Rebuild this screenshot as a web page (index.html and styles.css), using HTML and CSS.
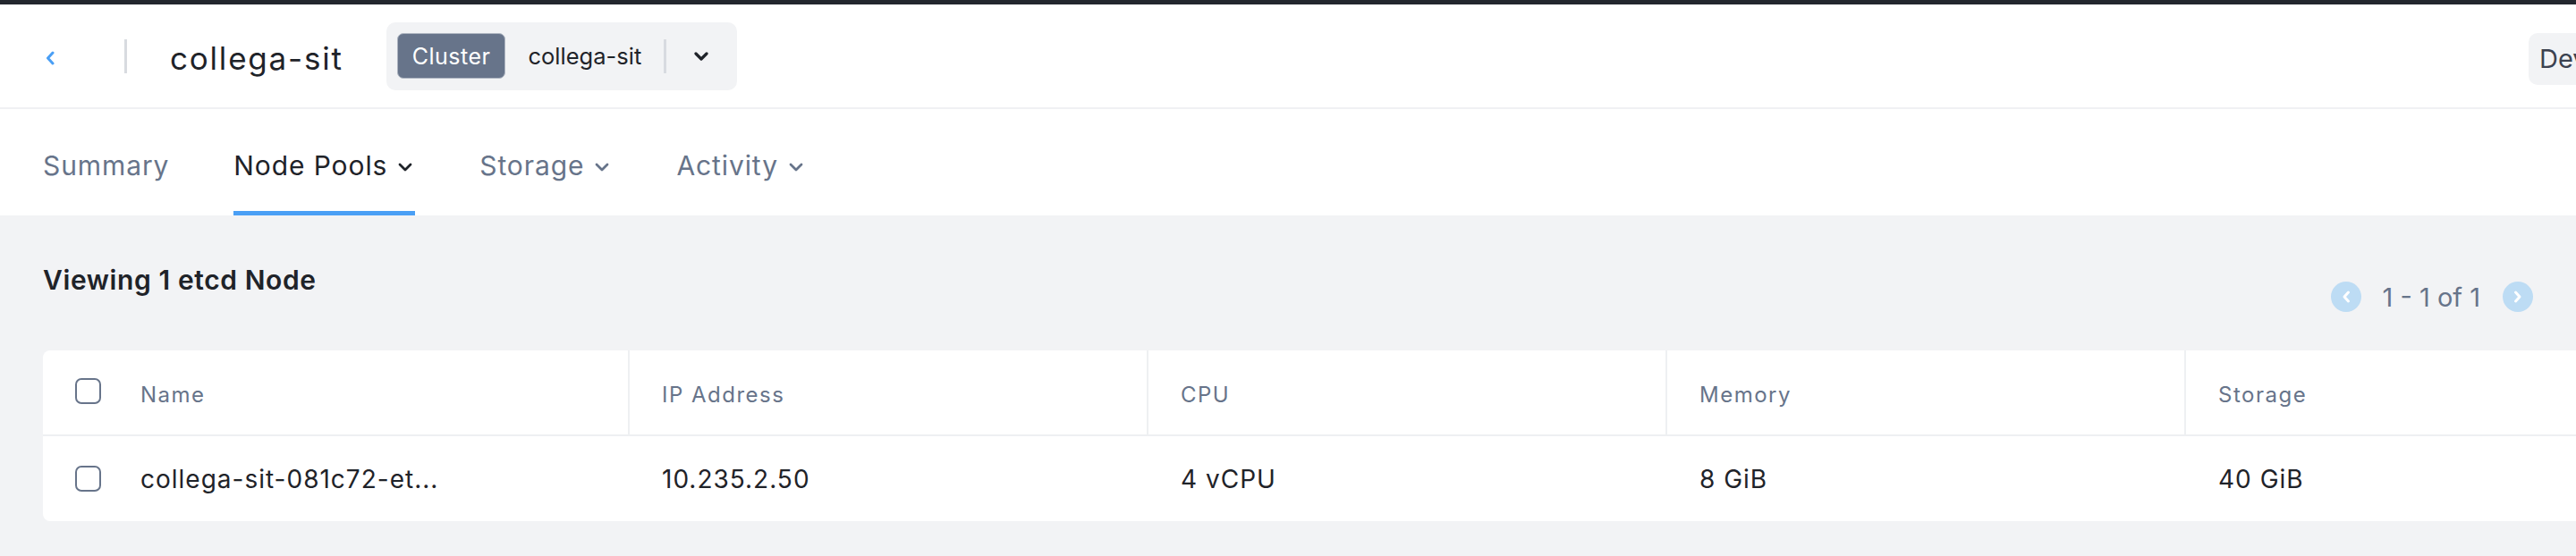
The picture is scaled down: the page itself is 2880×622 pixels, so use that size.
FILE: index.html
```html
<!DOCTYPE html>
<html lang="en">
<head>
<meta charset="utf-8">
<title>collega-sit - Node Pools</title>
<link rel="stylesheet" href="styles.css">
</head>
<body>
<div class="topbar"></div>
<header class="header">
  <a class="back" href="#"><svg width="10" height="16" viewBox="0 0 10 16"><path d="M8 2 L2.5 8 L8 14" fill="none" stroke="#4a9ff5" stroke-width="3" stroke-linecap="round" stroke-linejoin="round"/></svg></a>
  <span class="vdivider"></span>
  <h1 class="title">collega-sit</h1>
  <div class="context">
    <span class="badge">Cluster</span>
    <span class="context-name">collega-sit</span>
    <span class="vdivider vdivider-small"></span>
    <svg class="context-caret" width="16" height="10" viewBox="0 0 16 10"><path d="M2 2 L8 8 L14 2" fill="none" stroke="#1f2329" stroke-width="3.2" stroke-linecap="round" stroke-linejoin="round"/></svg>
  </div>
  <div class="env">Development</div>
</header>
<nav class="tabs">
  <a class="tab">Summary</a>
  <a class="tab tab-active">Node Pools<svg class="tab-caret" width="16" height="10" viewBox="0 0 16 10"><path d="M2 2 L8 8 L14 2" fill="none" stroke="currentColor" stroke-width="2.8" stroke-linecap="round" stroke-linejoin="round"/></svg></a>
  <a class="tab">Storage<svg class="tab-caret" width="16" height="10" viewBox="0 0 16 10"><path d="M2 2 L8 8 L14 2" fill="none" stroke="currentColor" stroke-width="2.8" stroke-linecap="round" stroke-linejoin="round"/></svg></a>
  <a class="tab">Activity<svg class="tab-caret" width="16" height="10" viewBox="0 0 16 10"><path d="M2 2 L8 8 L14 2" fill="none" stroke="currentColor" stroke-width="2.8" stroke-linecap="round" stroke-linejoin="round"/></svg></a>
</nav>
<main class="content">
  <div class="list-head">
    <h2 class="list-title">Viewing 1 etcd Node</h2>
    <div class="pager">
      <span class="pager-btn"><svg width="10" height="16" viewBox="0 0 10 16"><path d="M7.5 3 L3 8 L7.5 13" fill="none" stroke="#fff" stroke-width="3" stroke-linecap="round" stroke-linejoin="round"/></svg></span>
      <span class="pager-text">1 - 1 of 1</span>
      <span class="pager-btn"><svg width="10" height="16" viewBox="0 0 10 16"><path d="M2.5 3 L7 8 L2.5 13" fill="none" stroke="#fff" stroke-width="3" stroke-linecap="round" stroke-linejoin="round"/></svg></span>
    </div>
  </div>
  <div class="card">
    <div class="cell head first"><span class="checkbox"></span><span>Name</span></div>
    <div class="cell head">IP Address</div>
    <div class="cell head">CPU</div>
    <div class="cell head">Memory</div>
    <div class="cell head">Storage</div>
    <div class="cell body first"><span class="checkbox"></span><span>collega-sit-081c72-et...</span></div>
    <div class="cell body">10.235.2.50</div>
    <div class="cell body">4 vCPU</div>
    <div class="cell body">8 GiB</div>
    <div class="cell body">40 GiB</div>
  </div>
</main>
</body>
</html>
```

FILE: styles.css
```css
* { box-sizing: border-box; }

html, body {
  margin: 0;
  padding: 0;
}

body {
  width: 2880px;
  height: 622px;
  overflow: hidden;
  background: #f2f3f5;
  font-family: Inter, "Liberation Sans", sans-serif;
  color: #1f2329;
}

.topbar {
  height: 5px;
  background: #23272e;
}

.header {
  display: flex;
  align-items: center;
  height: 117px;
  padding-left: 51px;
  background: #fff;
  border-bottom: 2px solid #f0f1f3;
  overflow: hidden;
}

.back {
  display: flex;
  align-items: center;
  margin-top: 4px;
}

.vdivider {
  display: block;
  width: 3px;
  height: 38px;
  margin-left: 78px;
  background: #d8dbe0;
  flex-shrink: 0;
}

.title {
  margin: 0 0 0 48px;
  padding-top: 6px;
  font-size: 35px;
  line-height: 35px;
  font-weight: 400;
  letter-spacing: 1.8px;
  color: #1f2329;
}

.context {
  display: flex;
  align-items: center;
  height: 76px;
  margin-left: 48px;
  padding: 0 32px 0 12px;
  background: #f2f3f5;
  border-radius: 10px;
  flex-shrink: 0;
}

.badge {
  display: flex;
  align-items: center;
  height: 51px;
  padding: 0 16px;
  background: #67748a;
  border: 1px solid #aeb5c1;
  border-radius: 7px;
  color: #fff;
  font-size: 25px;
  letter-spacing: 0.5px;
}

.context-name {
  margin-left: 25px;
  font-size: 25.5px;
  color: #1f2329;
}

.vdivider-small {
  margin-left: 25px;
}

.context-caret {
  margin-left: 31px;
}

.env {
  display: flex;
  align-items: center;
  flex-shrink: 0;
  width: 180px;
  height: 58px;
  margin-left: auto;
  margin-right: -127px;
  margin-top: 6px;
  padding-left: 12px;
  background: #f2f3f5;
  border-radius: 10px;
  font-size: 29px;
  color: #3c4250;
  white-space: nowrap;
  overflow: hidden;
}

.tabs {
  display: flex;
  height: 119px;
  padding-left: 48px;
  background: #fff;
}

.tab {
  display: flex;
  align-items: center;
  height: 100%;
  padding-top: 12px;
  margin-right: 72px;
  border-bottom: 5px solid transparent;
  font-size: 30px;
  letter-spacing: 0.9px;
  color: #67748a;
  cursor: pointer;
}

.tab-active {
  color: #1f2329;
  border-bottom-color: #4a9ff5;
}

.tab-caret {
  margin-left: 12px;
  margin-right: 3px;
  margin-top: 4px;
}

.content {
  padding: 52px 48px 0 48px;
}

.list-head {
  display: flex;
  justify-content: space-between;
  align-items: flex-start;
}

.list-title {
  margin: 0;
  font-size: 30px;
  line-height: 40px;
  font-weight: 600;
  letter-spacing: 0.6px;
  color: #1f2329;
}

.pager {
  display: flex;
  align-items: center;
  margin-top: 22px;
  height: 34px;
}

.pager-btn {
  display: flex;
  align-items: center;
  justify-content: center;
  width: 34px;
  height: 34px;
  border-radius: 50%;
  background: #bddcf4;
}

.pager-text {
  margin: 0 25px 0 24px;
  font-size: 29px;
  color: #67748a;
}

.card {
  display: grid;
  grid-template-columns: 654px repeat(4, 580px);
  width: 2974px;
  margin-top: 43px;
  background: #fff;
  border-radius: 8px;
}

.cell {
  display: flex;
  align-items: center;
  padding-left: 38px;
  white-space: nowrap;
}

.head {
  height: 96px;
  padding-left: 36px;
  border-left: 2px solid #eef0f2;
  border-bottom: 2px solid #eef0f2;
  font-size: 24px;
  letter-spacing: 1.5px;
  color: #67748a;
  padding-top: 4px;
}

.body {
  height: 95px;
  font-size: 28px;
  letter-spacing: 1px;
  color: #1f2329;
}

.first {
  padding-left: 36px;
  border-left: none;
}

.checkbox {
  display: block;
  width: 29px;
  height: 29px;
  margin-right: 44px;
  border: 2.5px solid #67748a;
  border-radius: 7px;
  background: #fff;
  flex-shrink: 0;
}

.head .checkbox {
  margin-top: -8px;
}
```
